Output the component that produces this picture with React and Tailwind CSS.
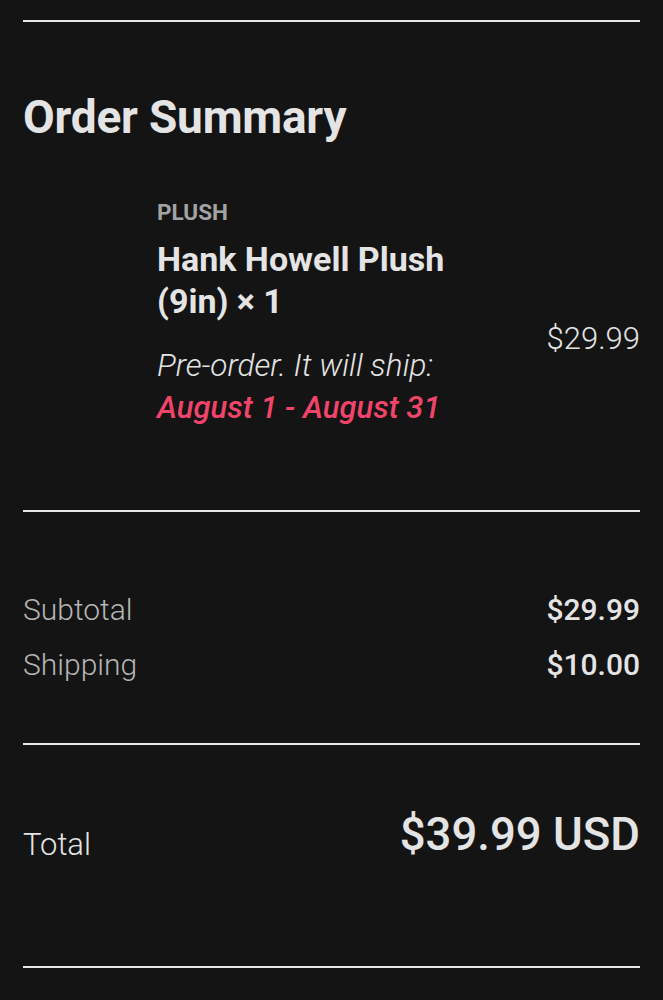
import React from "react";

const Divider = () => <div className="h-[2px] bg-[#e8e8e8]" />;

export default function App() {
  return (
    <div className="min-h-[1000px] bg-[#141414] px-[23px] pt-[20px] font-['Roboto',sans-serif] text-[#e4e4e4]">
      <Divider />
      <h1 className="mt-[67px] text-[46px] font-bold leading-[56px] tracking-[-0.2px]">
        Order Summary
      </h1>

      <div className="mt-[54px] flex items-center pb-[81px]">
        <div className="w-[134px] shrink-0" />
        <div className="w-[310px]">
          <div className="text-[22.5px] font-bold leading-[26px] text-[#a3a3a3]">PLUSH</div>
          <div className="mt-[13px] text-[34px] font-bold leading-[42px]">
            Hank Howell Plush
            <br />
            (9in) × 1
          </div>
          <div className="mt-[23px] whitespace-nowrap text-[31.5px] font-light italic leading-[42px]">
            Pre-order. It will ship:
          </div>
          <div className="whitespace-nowrap text-[31px] font-medium italic leading-[42px] text-[#f0446a]">
            August 1 - August 31
          </div>
        </div>
        <div className="ml-auto mt-[50px] text-[31px] font-light">$29.99</div>
      </div>

      <Divider />

      <div className="pt-[70px] pb-[51px]">
        <div className="flex items-center justify-between text-[30px] leading-[55px]">
          <span className="font-light text-[#b5b5b5]">Subtotal</span>
          <span className="font-medium">$29.99</span>
        </div>
        <div className="flex items-center justify-between text-[30px] leading-[55px]">
          <span className="font-light text-[#b5b5b5]">Shipping</span>
          <span className="font-medium">$10.00</span>
        </div>
      </div>

      <Divider />

      <div className="flex items-center justify-between pt-[56px] pb-[97px]">
        <span className="mt-[20px] text-[31px] font-light">Total</span>
        <span className="text-[45.5px] font-medium">$39.99 USD</span>
      </div>

      <Divider />
    </div>
  );
}
